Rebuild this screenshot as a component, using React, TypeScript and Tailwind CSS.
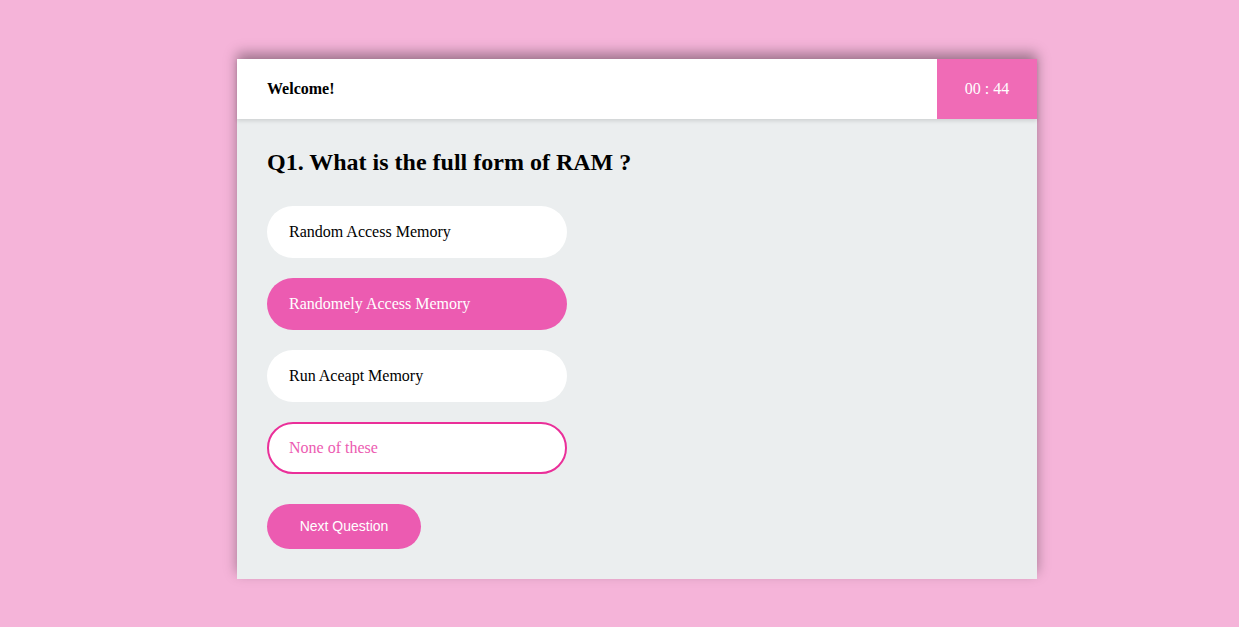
import React from "react";

export default function App() {
  const opts = [
    { t: "Random Access Memory", s: "normal" },
    { t: "Randomely Access Memory", s: "selected" },
    { t: "Run Aceapt Memory", s: "normal" },
    { t: "None of these", s: "hover" },
  ];
  return (
    <div
      className="w-[1239px] h-[627px] bg-[#f5b4d9] pt-[59px] pl-[237px] overflow-hidden"
      style={{ fontFamily: '"Liberation Serif", "Times New Roman", serif' }}
    >
      <div className="w-[800px] h-[520px] bg-[#ebeeef] shadow-[0_-6px_12px_rgba(0,0,0,0.35)] flex flex-col">
        <div className="h-[60px] bg-white flex items-stretch shadow-[0_2px_4px_rgba(0,0,0,0.12)] relative z-10">
          <div className="flex-1 flex items-center pl-[30px] text-[16px] font-bold text-black">Welcome!</div>
          <div className="w-[100px] bg-[#f06bb6] flex items-center justify-center text-white text-[16px]">00 : 44</div>
        </div>
        <div className="px-[30px] pt-[29px]">
          <h1 className="text-[24px] font-bold text-black leading-[28px]">Q1. What is the full form of RAM ?</h1>
          <div className="mt-[30px] flex flex-col gap-[20px]">
            {opts.map((o) => (
              <div
                key={o.t}
                className={
                  o.s === "selected"
                    ? "w-[300px] h-[52px] rounded-full bg-[#ec5bb1] text-white flex items-center pl-[22px] text-[16px]"
                    : o.s === "hover"
                    ? "w-[300px] h-[52px] rounded-full bg-white border-2 border-[#ea2f99] text-[#ec5bb1] flex items-center pl-[20px] text-[16px]"
                    : "w-[300px] h-[52px] rounded-full bg-white text-black flex items-center pl-[22px] text-[16px]"
                }
              >
                {o.t}
              </div>
            ))}
          </div>
          <button
            className="mt-[30px] w-[154px] h-[45px] rounded-full bg-[#ec5bb1] text-white text-[14px]"
            style={{ fontFamily: '"Liberation Sans", Arial, sans-serif' }}
          >
            Next Question
          </button>
        </div>
      </div>
    </div>
  );
}
